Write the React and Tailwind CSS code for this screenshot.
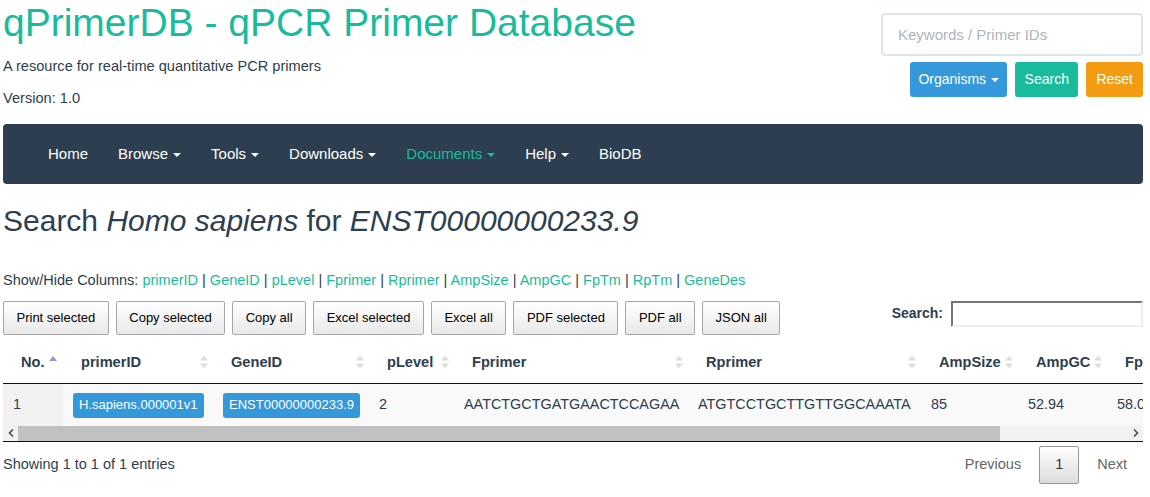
import React from "react";

const navItems = [
  { label: "Home" },
  { label: "Browse", caret: true },
  { label: "Tools", caret: true },
  { label: "Downloads", caret: true },
  { label: "Documents", caret: true, active: true },
  { label: "Help", caret: true },
  { label: "BioDB" },
];

const columns = ["primerID", "GeneID", "pLevel", "Fprimer", "Rprimer", "AmpSize", "AmpGC", "FpTm", "RpTm", "GeneDes"];

const exportButtons = ["Print selected", "Copy selected", "Copy all", "Excel selected", "Excel all", "PDF selected", "PDF all", "JSON all"];

const headers = [
  { label: "No.", w: "w-[60px]", asc: true },
  { label: "primerID", w: "w-[150px]" },
  { label: "GeneID", w: "w-[156px]" },
  { label: "pLevel", w: "w-[85px]" },
  { label: "Fprimer", w: "w-[234px]" },
  { label: "Rprimer", w: "w-[233px]" },
  { label: "AmpSize", w: "w-[97px]" },
  { label: "AmpGC", w: "w-[89px]" },
  { label: "FpTm", w: "w-[90px]" },
  { label: "RpTm", w: "w-[94px]" },
];

function Caret({ className = "border-t-white" }) {
  return <span className={`inline-block ml-[5px] w-0 h-0 border-x-[4px] border-x-transparent border-t-[4px] align-middle ${className}`} />;
}

function SortIcon({ asc }) {
  if (asc) {
    return (
      <svg width="8" height="12" viewBox="0 0 8 12" className="shrink-0">
        <path d="M0 5 L4 0 L8 5 Z" fill="#9494e4" />
      </svg>
    );
  }
  return (
    <svg width="8" height="14" viewBox="0 0 8 14" className="shrink-0">
      <path d="M0 5.5 L4 0.5 L8 5.5 Z" fill="#dedede" />
      <path d="M0 8.5 L4 13.5 L8 8.5 Z" fill="#dedede" />
    </svg>
  );
}

const Label = ({ children }) => (
  <span className="inline-flex items-center h-[25px] px-[6px] rounded-[3px] bg-[#3498db] text-white text-[13px]">
    {children}
  </span>
);

export default function App() {
  return (
    <div className="w-[1150px] h-[497px] overflow-hidden bg-white text-[#2c3e50] font-['Liberation_Sans',Arial,sans-serif]">
      <div className="w-[1140px] ml-[3px]">
        {/* header */}
        <div className="flex justify-between">
          <div>
            <h1 className="text-[39px] leading-[43px] text-[#18bc9c] mt-px">qPrimerDB - qPCR Primer Database</h1>
            <p className="text-[14.6px] leading-[20px] mt-[12px]">A resource for real-time quantitative PCR primers</p>
            <p className="text-[14.6px] leading-[20px] mt-[12px]">Version: 1.0</p>
          </div>
          <div className="flex flex-col items-end pt-[13px]">
            <input
              placeholder="Keywords / Primer IDs"
              className="w-[262px] h-[43px] border-2 border-[#dce4ec] rounded-[4px] px-[15px] text-[15px] placeholder:text-[#acb6c0] outline-none"
            />
            <div className="flex gap-[8px] mt-[6px]">
              <button className="h-[35px] px-[8px] rounded-[3px] bg-[#3498db] text-white text-[14px]">
                Organisms<Caret />
              </button>
              <button className="h-[35px] px-[9.5px] rounded-[3px] bg-[#18bc9c] text-white text-[14px]">Search</button>
              <button className="h-[35px] px-[10px] rounded-[3px] bg-[#f39c12] text-white text-[14px]">Reset</button>
            </div>
          </div>
        </div>

        {/* navbar */}
        <nav className="mt-[16px] h-[60px] rounded-[4px] bg-[#2c3e50] flex items-center pl-[30px]">
          {navItems.map((n) => (
            <a key={n.label} className={`px-[15px] text-[15px] ${n.active ? "text-[#18bc9c]" : "text-white"}`}>
              {n.label}
              {n.caret && <Caret className={n.active ? "border-t-[#18bc9c]" : "border-t-white"} />}
            </a>
          ))}
        </nav>

        <h2 className="text-[30px] leading-[36px] mt-[19px]">
          Search <i>Homo sapiens</i> for <i>ENST00000000233.9</i>
        </h2>

        <p className="text-[14.5px] mt-[31px]">
          Show/Hide Columns:{" "}
          {columns.map((c, i) => (
            <span key={c}>
              <a className="text-[#18bc9c]">{c}</a>
              {i < columns.length - 1 && " | "}
            </span>
          ))}
        </p>

        {/* toolbar */}
        <div className="flex justify-between items-start mt-[9px]">
          <div className="flex gap-[7px]">
            {exportButtons.map((b) => (
              <button
                key={b}
                className="h-[34px] px-[12.5px] rounded-[2px] border border-[#a6a6a6] bg-gradient-to-b from-white to-[#e9e9e9] text-[13px] text-black"
              >
                {b}
              </button>
            ))}
          </div>
          <label className="flex items-center gap-[8px] text-[14px] font-bold">
            Search:
            <input className="w-[192px] h-[26px] border-2 border-t-[#767676] border-l-[#767676] border-b-[#eeeeee] border-r-[#eeeeee] outline-none" />
          </label>
        </div>

        {/* table */}
        <div className="mt-[7px] w-[1140px] overflow-hidden">
          <table className="table-fixed border-collapse w-[1288px] text-[14.4px]">
            <thead>
              <tr className="h-[42px] border-b border-[#111]">
                {headers.map((h) => (
                  <th key={h.label} className={`${h.w} p-0 font-bold text-left`}>
                    <div className={`flex items-center ${h.asc ? "pl-[18px] pr-[7px] gap-[4px]" : "pl-[18px] pr-[5px] justify-between"}`}>
                      <span className="text-[14.6px]">{h.label}</span>
                      <SortIcon asc={h.asc} />
                    </div>
                  </th>
                ))}
              </tr>
            </thead>
            <tbody>
              <tr className="h-[42px] bg-[#f9f9f9]">
                <td className="pl-[10px] bg-[#f1f1f1]">1</td>
                <td className="pl-[10px]"><Label>H.sapiens.000001v1</Label></td>
                <td className="pl-[10px]"><Label>ENST00000000233.9</Label></td>
                <td className="pl-[10px]">2</td>
                <td className="pl-[10px]">AATCTGCTGATGAACTCCAGAA</td>
                <td className="pl-[10px]">ATGTCCTGCTTGTTGGCAAATA</td>
                <td className="pl-[10px]">85</td>
                <td className="pl-[10px]">52.94</td>
                <td className="pl-[10px]">58.06</td>
                <td className="pl-[10px]">58.20</td>
              </tr>
            </tbody>
          </table>
          {/* scrollbar */}
          <div className="flex h-[15px] bg-[#f1f1f1] items-center">
            <div className="w-[15px] flex justify-center">
              <svg width="6" height="8" viewBox="0 0 6 8"><path d="M5 0.5 L1.5 4 L5 7.5" stroke="#505050" strokeWidth="1.6" fill="none" /></svg>
            </div>
            <div className="flex-1 h-full">
              <div className="w-[982px] h-full bg-[#c1c1c1]" />
            </div>
            <div className="w-[15px] flex justify-center">
              <svg width="6" height="8" viewBox="0 0 6 8"><path d="M1 0.5 L4.5 4 L1 7.5" stroke="#505050" strokeWidth="1.6" fill="none" /></svg>
            </div>
          </div>
          <div className="h-px bg-[#111]" />
        </div>

        {/* footer */}
        <div className="flex justify-between items-center mt-[4px]">
          <span className="text-[14.5px]">Showing 1 to 1 of 1 entries</span>
          <div className="flex items-center text-[14.5px] text-[#666]">
            <span className="px-[18px]">Previous</span>
            <span className="w-[40px] h-[38px] flex items-center justify-center rounded-[2px] border border-[#979797] bg-gradient-to-b from-white to-[#dcdcdc] text-[#333]">1</span>
            <span className="pl-[18px] pr-[16px]">Next</span>
          </div>
        </div>
      </div>
    </div>
  );
}
